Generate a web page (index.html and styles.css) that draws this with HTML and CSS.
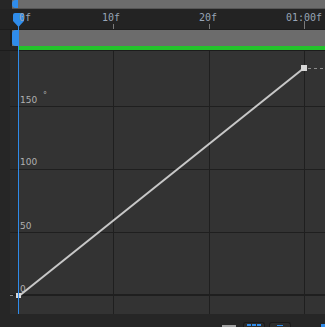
FILE: index.html
```html
<!DOCTYPE html>
<html lang="en">
<head>
    <meta charset="UTF-8">
    <title>Graph Editor</title>
    <link rel="stylesheet" href="styles.css">
</head>
<body>
    <div class="panel">
        <!-- Work area bar -->
        <div class="row work-row">
            <div class="gutter"></div>
            <div class="bar"><span class="cap"></span></div>
        </div>

        <!-- Time ruler -->
        <div class="ruler">
            <svg width="325" height="20" viewBox="0 0 325 20">
                <!-- playhead head sits under the labels -->
                <path d="M13 6 Q13 4 15 4 L22 4 Q24 4 24 6 L24 12 L18.5 18 L13 12 Z" fill="#2f8ceb"></path>
                <g class="ruler-text">
                    <text x="19" y="12">0f</text>
                    <text x="111" y="12" text-anchor="middle">10f</text>
                    <text x="208" y="12" text-anchor="middle">20f</text>
                    <text x="304" y="12" text-anchor="middle">01:00f</text>
                </g>
                <g class="tick">
                    <rect x="113" y="15" width="1" height="5"></rect>
                    <rect x="209" y="15" width="1" height="5"></rect>
                    <rect x="304" y="12" width="1" height="8"></rect>
                </g>
            </svg>
        </div>
        <div class="sep"></div>

        <!-- Layer range bar -->
        <div class="row range-row">
            <div class="gutter"></div>
            <div class="bar"><span class="cap"></span></div>
        </div>
        <div class="row green-row">
            <div class="gutter"></div>
            <div class="green"></div>
        </div>
        <div class="sep"></div>

        <!-- Graph -->
        <div class="graph">
            <svg width="325" height="263" viewBox="0 0 325 263" shape-rendering="crispEdges">
                <rect x="0" y="0" width="10" height="263" fill="#262626"></rect>
                <rect x="10" y="0" width="8" height="263" fill="#2b2b2b"></rect>
                <rect x="19" y="0" width="306" height="263" fill="#333333"></rect>

                <g class="grid">
                    <rect x="10" y="55" width="315" height="1"></rect>
                    <rect x="10" y="118" width="315" height="1"></rect>
                    <rect x="10" y="181" width="315" height="1"></rect>
                    <rect x="10" y="243" width="315" height="2"></rect>
                    <rect x="113" y="0" width="1" height="263"></rect>
                    <rect x="209" y="0" width="1" height="263"></rect>
                    <rect x="304" y="0" width="1" height="263"></rect>
                </g>

                <g class="value-text">
                    <text x="20" y="52">150</text>
                    <text x="43" y="47" class="deg">°</text>
                    <text x="20" y="114">100</text>
                    <text x="20" y="178">50</text>
                    <text x="20" y="241">0</text>
                </g>

                <line x1="19" y1="245" x2="304" y2="17" class="curve" shape-rendering="auto"></line>
                <line x1="308" y1="17.5" x2="325" y2="17.5" class="dash"></line>
                <rect x="10" y="244" width="3" height="1" fill="#8a8a8a"></rect>

                <rect x="16" y="242" width="5" height="5" class="key"></rect>
                <rect x="301" y="14" width="6" height="6" class="key"></rect>
            </svg>
        </div>

        <!-- Bottom toolbar -->
        <div class="footer">
            <span class="fbar"></span>
            <span class="fbtn">
                <i></i><i></i><i></i>
            </span>
            <span class="fbtn"><i class="wide"></i></span>
            <span class="fplus"></span>
        </div>

        <!-- Playhead line -->
        <div class="playhead"></div>
    </div>
</body>
</html>
```

FILE: styles.css
```css
:root {
    --dark: #262626;
    --ruler-bg: #232323;
    --bar-gray: #6c6c6c;
    --blue: #2f8ceb;
    --green: #22c32b;
    --line: #1c1c1c;
}

body {
    margin: 0;
    background-color: var(--dark);
    font-family: "DejaVu Sans", sans-serif;
}

.panel {
    position: relative;
    width: 325px;
    height: 327px;
    overflow: hidden;
    display: flex;
    flex-direction: column;
    background-color: var(--dark);
}

.row {
    display: flex;
}

.gutter {
    width: 12px;
    flex-shrink: 0;
    background-color: var(--dark);
}

.bar {
    flex-grow: 1;
    background-color: var(--bar-gray);
    display: flex;
}

.cap {
    width: 6px;
    background-color: var(--blue);
    border-radius: 4px 0 0 4px;
}

.work-row {
    height: 9px;
}

.work-row .bar {
    border-bottom: 1px solid #555;
    box-sizing: border-box;
}

.range-row {
    height: 16px;
}

.range-row .gutter {
    border-right: 2px solid #1e1e1e;
    width: 10px;
}

.green-row {
    height: 4px;
}

.green-row .gutter {
    width: 19px;
}

.green {
    flex-grow: 1;
    background-color: var(--green);
}

.sep {
    height: 1px;
    background-color: var(--line);
}

/* Ruler */
.ruler {
    height: 20px;
    background-color: var(--ruler-bg);
}

.ruler svg,
.graph svg {
    display: block;
}

.ruler-text text {
    font-family: "DejaVu Sans Mono", monospace;
    font-size: 10px;
    fill: #98a5b6;
}

.tick rect {
    fill: #7a7a7a;
}

/* Graph */
.graph {
    height: 263px;
}

.grid rect {
    fill: #1f1f1f;
}

.value-text text {
    font-size: 9px;
    fill: #b0b0b0;
}

.value-text .deg {
    font-size: 8px;
}

.curve {
    stroke: #c8c8c8;
    stroke-width: 2;
}

.dash {
    stroke: #8c8c8c;
    stroke-width: 1;
    stroke-dasharray: 3 3;
}

.key {
    fill: #d8d8d8;
}

/* Footer */
.footer {
    height: 13px;
    display: flex;
    align-items: flex-end;
    gap: 4px;
    padding-left: 222px;
}

.fbar {
    width: 14px;
    height: 2px;
    background-color: #a0a0a0;
    margin-right: 3px;
}

.fbtn {
    width: 21px;
    height: 3px;
    border: 1px solid #1a1a1a;
    border-bottom: none;
    border-radius: 3px 3px 0 0;
    background-color: #2c2c2c;
    display: flex;
    justify-content: center;
    gap: 1px;
    padding-top: 1px;
}

.fbtn i {
    width: 4px;
    height: 2px;
    background-color: var(--blue);
}

.fbtn i.wide {
    width: 6px;
    height: 1px;
    margin-top: 1px;
}

.fplus {
    width: 4px;
    height: 3px;
    margin-left: 26px;
    background-color: var(--blue);
}

/* Playhead */
.playhead {
    position: absolute;
    left: 18px;
    top: 26px;
    width: 1px;
    height: 288px;
    background-color: var(--blue);
}
```
